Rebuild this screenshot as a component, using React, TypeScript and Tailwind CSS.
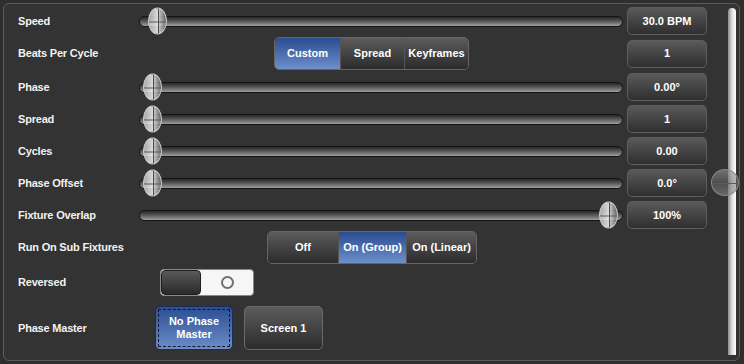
import type { ReactNode } from 'react'

const font = { fontFamily: '"Liberation Sans", Arial, sans-serif' }

function Label({ children }: { children: ReactNode }) {
  return (
    <div className="w-[121px] shrink-0 text-[11px] font-bold text-[#f2f2f2] tracking-[-0.2px]">
      {children}
    </div>
  )
}

function ValueBox({ value }: { value: string }) {
  return (
    <div className="ml-[4px] flex h-[28px] w-[80px] shrink-0 items-center justify-center rounded-[5px] border border-[#5e5e5e] bg-gradient-to-b from-[#5a5a5a] to-[#2f2f2f] text-[11px] font-bold text-white">
      {value}
    </div>
  )
}

function Knob({ left }: { left: number }) {
  return (
    <div
      className="absolute top-1/2 h-[27px] w-[19px] -translate-y-1/2 overflow-hidden rounded-[50%] border border-[#d0d0d0] bg-gradient-to-r from-[#c4c4c4]/80 via-[#ececec]/90 to-[#707070]/80"
      style={{ left }}
    >
      <div className="absolute left-1/2 top-0 h-full w-px bg-[#4a4a4a]" />
      <div className="absolute left-0 top-1/2 h-px w-full bg-[#5a5a5a]" />
    </div>
  )
}

function Slider({ knob }: { knob: number }) {
  return (
    <div className="relative flex h-full flex-1 items-center">
      <div className="h-[11px] w-full rounded-full border border-[#141414] bg-gradient-to-b from-[#262626] via-[#5c5c5c] to-[#a0a0a0]" />
      <Knob left={knob} />
    </div>
  )
}

function SliderRow({ label, value, knob, mt }: { label: string; value: string; knob: number; mt: string }) {
  return (
    <div className={`flex h-[28px] items-center ${mt}`}>
      <Label>{label}</Label>
      <Slider knob={knob} />
      <ValueBox value={value} />
    </div>
  )
}

function Segmented({ items, active, widths }: { items: string[]; active: number; widths: string[] }) {
  return (
    <div className="flex h-[33px] overflow-hidden rounded-[5px] border border-[#666]">
      {items.map((item, i) => (
        <div
          key={item}
          className={`flex items-center justify-center text-[11px] font-bold text-white ${widths[i]} ${
            i > 0 ? 'border-l border-[#555]' : ''
          } ${
            i === active
              ? 'bg-gradient-to-b from-[#2a4d92] to-[#6e8fcb]'
              : 'bg-gradient-to-b from-[#5c5c5c] to-[#2c2c2c]'
          }`}
        >
          {item}
        </div>
      ))}
    </div>
  )
}

export default function App() {
  return (
    <div className="h-[364px] w-[744px] bg-[#2e2e2e] p-[3px]" style={font}>
      <div className="flex h-[358px] w-[737px] rounded-[6px] border border-[#5c5c5c] bg-[#333333]">
        {/* Settings */}
        <div className="flex flex-1 flex-col pl-[14px] pr-[2px] pt-[3px]">
          <SliderRow label="Speed" value="30.0 BPM" knob={9} mt="" />

          <div className="mt-[2px] flex h-[33px] items-center">
            <Label>Beats Per Cycle</Label>
            <div className="flex flex-1 items-center">
              <div className="ml-[135px]">
                <Segmented
                  items={['Custom', 'Spread', 'Keyframes']}
                  active={0}
                  widths={['w-[65px]', 'w-[64px]', 'w-[64px]']}
                />
              </div>
            </div>
            <ValueBox value="1" />
          </div>

          <SliderRow label="Phase" value="0.00°" knob={4} mt="mt-[3px]" />
          <SliderRow label="Spread" value="1" knob={4} mt="mt-[4px]" />
          <SliderRow label="Cycles" value="0.00" knob={4} mt="mt-[4px]" />
          <SliderRow label="Phase Offset" value="0.0°" knob={4} mt="mt-[4px]" />
          <SliderRow label="Fixture Overlap" value="100%" knob={460} mt="mt-[4px]" />

          <div className="mt-[2px] flex h-[33px] items-center">
            <Label>Run On Sub Fixtures</Label>
            <div className="ml-[128px]">
              <Segmented
                items={['Off', 'On (Group)', 'On (Linear)']}
                active={1}
                widths={['w-[70px]', 'w-[68px]', 'w-[70px]']}
              />
            </div>
          </div>

          <div className="mt-[5px] flex h-[27px] items-center">
            <Label>Reversed</Label>
            <div className="ml-[21px] flex h-[27px] w-[94px] overflow-hidden rounded-[4px] border border-[#8a8a8a] bg-[#f6f6f6]">
              <div className="h-full w-[40px] rounded-[4px] border border-[#1e1e1e] bg-gradient-to-b from-[#5a5a5a] to-[#2a2a2a]" />
              <div className="flex flex-1 items-center justify-center">
                <div className="h-[13px] w-[13px] rounded-full border-2 border-[#6e6e6e]" />
              </div>
            </div>
          </div>

          <div className="mt-[10px] flex h-[44px] items-center">
            <Label>Phase Master</Label>
            <div className="ml-[16px] flex h-[44px] w-[78px] items-center justify-center rounded-[5px] border border-[#1c2c52] bg-gradient-to-b from-[#2c4f92] to-[#6c8dc9] p-[2px]">
              <div className="flex h-full w-full items-center justify-center border border-dashed border-[#10182c] text-center text-[11px] font-bold leading-[13px] text-white">
                No Phase
                <br />
                Master
              </div>
            </div>
            <div className="ml-[11px] flex h-[44px] w-[79px] items-center justify-center rounded-[5px] border border-[#6a6a6a] bg-gradient-to-b from-[#5c5c5c] to-[#2c2c2c] text-[11px] font-bold text-white">
              Screen 1
            </div>
          </div>
        </div>

        {/* Scrollbar */}
        <div className="relative w-[30px] shrink-0 pb-[5px] pt-[4px]">
          <div className="ml-[19px] h-full w-[8px] rounded-t-[4px] bg-gradient-to-r from-[#8c8c8c] via-[#dedede] to-[#ffffff]" />
          <div className="absolute left-[2px] top-[165px] h-[27px] w-[28px] overflow-hidden rounded-[50%] border border-[#8a8a8a] bg-gradient-to-b from-[#9a9a9a]/60 via-[#6a6a6a]/50 to-[#8a8a8a]/60">
            <div className="absolute left-0 top-1/2 h-px w-full bg-[#5a5a5a]" />
          </div>
        </div>
      </div>
    </div>
  )
}
